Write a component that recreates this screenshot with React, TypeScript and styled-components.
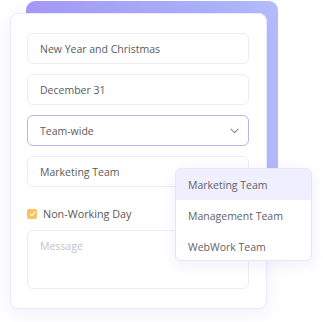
import React from "react";
import styled, { createGlobalStyle } from "styled-components";

const Global = createGlobalStyle`
  html, body { margin: 0; padding: 0; background: #ffffff; }
  body { font-family: "Open Sans", "Liberation Sans", sans-serif; }
  * { box-sizing: border-box; }
`;

const Page = styled.div`
  position: relative;
  width: 323px;
  height: 322px;
  overflow: hidden;
`;

const Backdrop = styled.div`
  position: absolute;
  left: 26px;
  top: 1px;
  width: 252px;
  height: 232px;
  border-radius: 9px;
  background: linear-gradient(90deg, #a49af5 0%, #aab0fa 70%, #b5bcfc 100%);
`;

const Card = styled.div`
  position: relative;
  margin: 13px 0 0 10px;
  width: 257px;
  height: 296px;
  background: #ffffff;
  border: 1px solid #ebeafb;
  border-radius: 8px;
  box-shadow: 0 4px 18px rgba(130, 120, 230, 0.12);
  padding: 19px 17px 0 16px;
  display: flex;
  flex-direction: column;
  gap: 10px;
`;

const Field = styled.div<{ $active?: boolean }>`
  height: 31px;
  width: 222px;
  border: 1px solid ${(p) => (p.$active ? "#bab3ee" : "#ececf1")};
  border-radius: 6px;
  display: flex;
  align-items: center;
  justify-content: space-between;
  padding: 0 9px 0 12px;
  font-size: 10.5px;
  color: #5a5a5e;
  background: #ffffff;
`;

const CheckRow = styled.div`
  margin-top: 11px;
  height: 11px;
  display: flex;
  align-items: center;
  gap: 6px;
  font-size: 10.8px;
  color: #575757;
`;

const Box = styled.div`
  width: 10px;
  height: 10px;
  border-radius: 2px;
  background: #f8c35c;
  display: flex;
  align-items: center;
  justify-content: center;
`;

const TextArea = styled.div`
  margin-top: 1px;
  width: 222px;
  height: 59px;
  border: 1px solid #ececf1;
  border-radius: 6px;
  padding: 8px 12px;
  font-size: 10.5px;
  color: #c3c3c9;
`;

const Menu = styled.div`
  position: absolute;
  left: 175px;
  top: 168px;
  width: 137px;
  height: 93px;
  background: #ffffff;
  border: 1px solid #e7e7f4;
  border-radius: 6px;
  box-shadow: 0 4px 14px rgba(120, 120, 200, 0.12);
  overflow: hidden;
  display: flex;
  flex-direction: column;
`;

const MenuItem = styled.div<{ $selected?: boolean }>`
  height: 31px;
  flex: 0 0 31px;
  display: flex;
  align-items: center;
  padding-left: 12px;
  font-size: 10.5px;
  color: #616168;
  background: ${(p) => (p.$selected ? "#efeffd" : "transparent")};
`;

export default function App() {
  return (
    <Page>
      <Global />
      <Backdrop />
      <Card>
        <Field>New Year and Christmas</Field>
        <Field>December 31</Field>
        <Field $active>
          Team-wide
          <svg width="9" height="6" viewBox="0 0 9 6" fill="none">
            <path d="M1 1.2L4.5 4.6L8 1.2" stroke="#8a8a94" strokeWidth="1.1" strokeLinecap="round" strokeLinejoin="round" />
          </svg>
        </Field>
        <Field>Marketing Team</Field>
        <CheckRow>
          <Box>
            <svg width="7" height="6" viewBox="0 0 7 6" fill="none">
              <path d="M1 3.1L2.8 4.8L6 1.2" stroke="#ffffff" strokeWidth="1.1" strokeLinecap="round" strokeLinejoin="round" />
            </svg>
          </Box>
          Non-Working Day
        </CheckRow>
        <TextArea>Message</TextArea>
      </Card>
      <Menu>
        <MenuItem $selected>Marketing Team</MenuItem>
        <MenuItem>Management Team</MenuItem>
        <MenuItem>WebWork Team</MenuItem>
      </Menu>
    </Page>
  );
}
